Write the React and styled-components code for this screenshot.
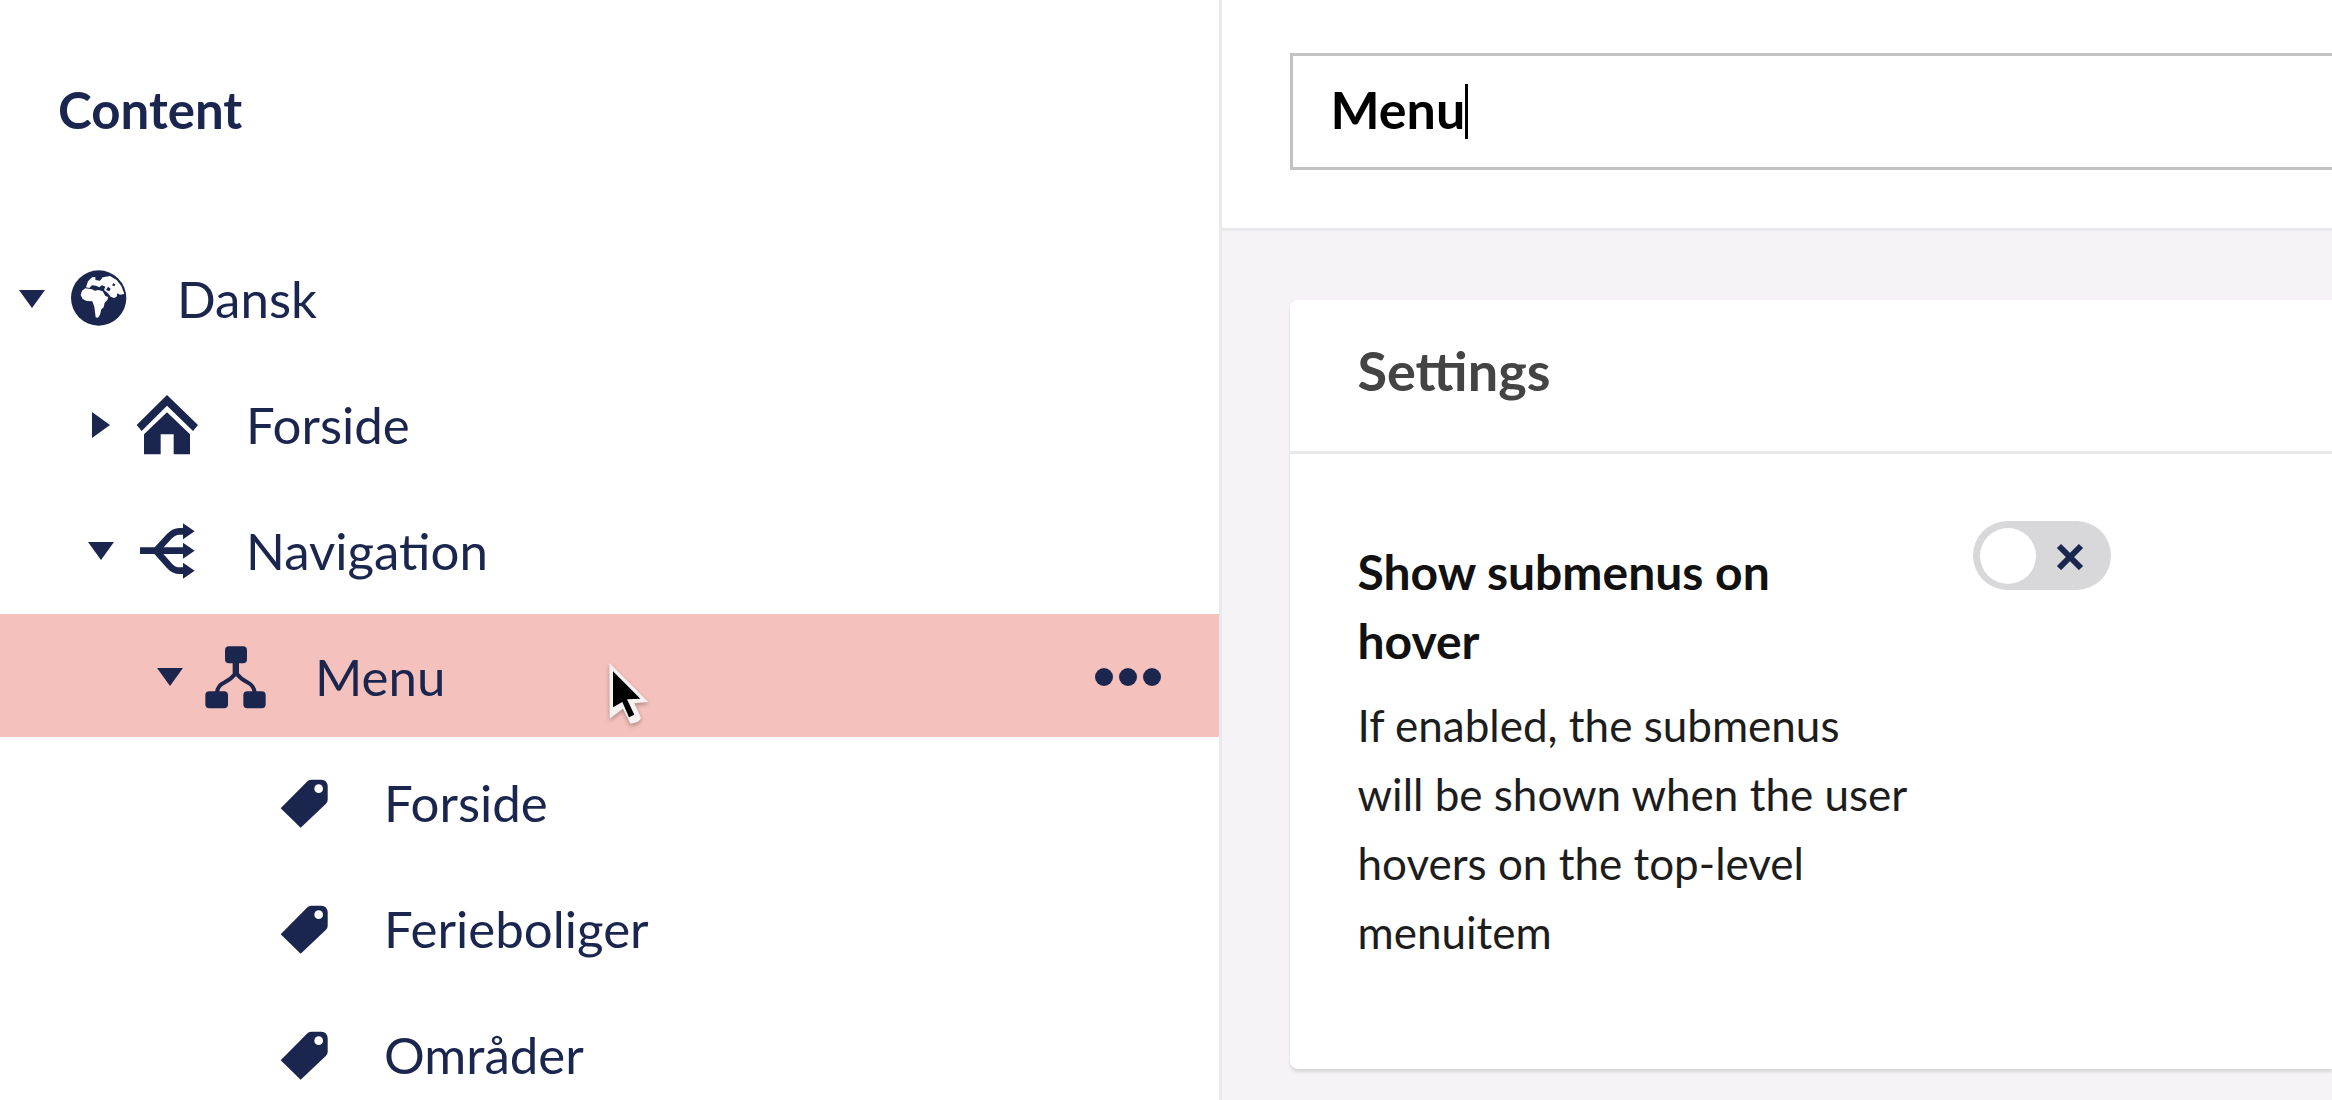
import { useState } from 'react';
import styled, { createGlobalStyle } from 'styled-components';

const GlobeIcon = () => (
  <Icon viewBox="12 15 189 189">
    <circle cx="104" cy="108" r="83" />
    <path
      fill="#fff"
      d="M50 99L54 86L64 79L84 82L92 86L104 84L116 88L124 102L133 105L130 114L122 122L119 136L112 142L108 158L102 167L95 166L93 150L91 134L85 118L68 117L56 111Z"
    />
    <path
      fill="#fff"
      d="M66 76L72 58L84 46L94 45L94 54L108 56L116 46L138 42L158 54L172 72L181 96L168 98L160 94L158 104L150 108L140 104L132 94L120 84L124 74L114 70L106 76L96 71L84 70L76 78Z"
    />
    <path d="M132 74l8 6l-4 8l-10-4zM148 64l6 3l-3 6l-7-3z" />
  </Icon>
);

const HouseIcon = () => (
  <Icon viewBox="411 456 189 189">
    <path d="M501 462L594 552L579 570L501 494L425 570L410 552Z" />
    <path d="M501 514L570 580V640H521V580H482V640H432V580Z" />
  </Icon>
);

const BranchIcon = () => (
  <Icon viewBox="15 6 189 189">
    <g fill="none" stroke="currentColor" strokeWidth="20">
      <path d="M24 101H160" />
      <path d="M72 101L112 58Q126 43 142 43H160" />
      <path d="M72 101L112 146Q126 161 142 161H160" />
    </g>
    <path d="M153 19L188 43L153 67ZM153 77L188 101L153 125ZM153 137L188 161L153 185Z" />
  </Icon>
);

const SitemapIcon = () => (
  <Icon viewBox="18 12 189 189">
    <rect x="75" y="16" width="66" height="51" rx="12" />
    <rect x="16" y="151" width="68" height="51" rx="12" />
    <rect x="130" y="151" width="67" height="51" rx="12" />
    <path
      fill="none"
      stroke="currentColor"
      strokeWidth="12"
      d="M51 155Q52 134 74 124Q94 114 108 96Q122 114 142 124Q162 134 164 155"
    />
    <path d="M98 60h19v36l-9 10l-10-10z" />
  </Icon>
);

const TagIcon = () => (
  <Icon viewBox="3 0 189 189">
    <path d="M20 112L101 30Q106 26 113 26H142Q160 27 161 46V86Q161 93 156 98L80 170Z" />
    <circle cx="134" cy="53" r="13" fill="#fff" />
  </Icon>
);

const icons = {
  globe: GlobeIcon,
  house: HouseIcon,
  branch: BranchIcon,
  sitemap: SitemapIcon,
  tag: TagIcon,
};

const nodes = [
  { id: 1, label: 'Dansk', icon: 'globe', level: 0, open: true, parent: true },
  { id: 2, label: 'Forside', icon: 'house', level: 1, parent: true },
  { id: 3, label: 'Navigation', icon: 'branch', level: 1, open: true, parent: true },
  { id: 4, label: 'Menu', icon: 'sitemap', level: 2, open: true, parent: true, active: true },
  { id: 5, label: 'Forside', icon: 'tag', level: 3 },
  { id: 6, label: 'Ferieboliger', icon: 'tag', level: 3 },
  { id: 7, label: 'Områder', icon: 'tag', level: 3 },
];

const App = () => {
  const [name, setName] = useState('Menu');
  const [hover, setHover] = useState(false);

  return (
    <Frame>
      <GlobalStyle />

      <Sidebar>
        <SidebarTitle>Content</SidebarTitle>

        <Tree>
          {nodes.map(x => {
            const NodeIcon = icons[x.icon];

            return (
              <Row key={x.id} $level={x.level} $active={x.active}>
                <CaretSlot>
                  {x.parent && (
                    <CaretButton aria-label={`Toggle ${x.label}`} aria-expanded={!!x.open}>
                      {x.open ? (
                        <svg width="26" height="18" viewBox="0 0 26 18">
                          <path d="M0 0H26L13 18Z" fill="currentColor" />
                        </svg>
                      ) : (
                        <svg width="18" height="26" viewBox="0 0 18 26">
                          <path d="M0 0V26L18 13Z" fill="currentColor" />
                        </svg>
                      )}
                    </CaretButton>
                  )}
                </CaretSlot>

                <NodeLink href="#">
                  <NodeIcon />
                  {x.label}
                </NodeLink>

                {x.active && (
                  <>
                    <MoreButton aria-label="Actions">
                      <svg width="66" height="18" viewBox="0 0 66 18" fill="currentColor">
                        <circle cx="9" cy="9" r="9" />
                        <circle cx="33" cy="9" r="9" />
                        <circle cx="57" cy="9" r="9" />
                      </svg>
                    </MoreButton>
                    <Pointer viewBox="141 60 126 189">
                      <path
                        fill="#f6f0f0"
                        d="M145 62L262 180L220 184L240 228Q236 242 208 245L186 200L146 230Z"
                      />
                      <path d="M156 88L238 170L198 172L220 218L204 226L184 180L156 196Z" />
                    </Pointer>
                  </>
                )}
              </Row>
            );
          })}
        </Tree>
      </Sidebar>

      <Main>
        <Header>
          <NameField>
            <NameInput
              aria-label="Name"
              value={name}
              onChange={e => setName(e.target.value)}
            />
            <TextCaret />
          </NameField>
        </Header>

        <Card>
          <CardTitle>Settings</CardTitle>

          <Property>
            <PropertyText>
              <PropertyLabel htmlFor="hover">Show submenus on hover</PropertyLabel>
              <PropertyHint>
                If enabled, the submenus will be shown when the user hovers on the
                top-level menuitem
              </PropertyHint>
            </PropertyText>

            <Toggle>
              <input
                id="hover"
                type="checkbox"
                checked={hover}
                onChange={e => setHover(e.target.checked)}
              />
              <svg width="28" height="28" viewBox="0 0 28 28">
                <path
                  d="M3 4L25 26M25 4L3 26"
                  fill="none"
                  stroke="currentColor"
                  strokeWidth="6"
                />
              </svg>
            </Toggle>
          </Property>
        </Card>
      </Main>
    </Frame>
  );
};

export default App;

const GlobalStyle = createGlobalStyle`
  * {
    box-sizing: border-box;
  }

  body {
    margin: 0;
    background-color: #fff;
    font-family: Lato, 'Open Sans', sans-serif;
    color: #1b264f;
  }

  button {
    padding: 0;
    border: none;
    background: none;
    color: inherit;
    cursor: pointer;
  }
`;

const Frame = styled.div`
  display: grid;
  grid-template-columns: minmax(0, 11fr) minmax(0, 10fr);
  min-height: 100vh;
  border-bottom: 1px solid #e9e9eb;
  overflow: hidden;
`;

const Sidebar = styled.nav`
  border-right: 3px solid #e9e9eb;
`;

const SidebarTitle = styled.h1`
  margin: 0;
  padding: 79px 58px 95px;
  font-size: 51px;
  line-height: 62px;
  font-weight: 700;
`;

const Tree = styled.ul`
  display: flex;
  flex-direction: column;
  gap: 3px;
  margin: 0;
  padding: 0;
  list-style: none;
`;

const Row = styled.li`
  position: relative;
  display: flex;
  align-items: center;
  height: 123px;
  padding: 2px 58px 0 ${({ $level }) => 14 + $level * 69}px;
  background-color: ${({ $active }) => ($active ? '#f5c1bc' : 'transparent')};
`;

const CaretSlot = styled.div`
  display: flex;
  width: 54px;
`;

const CaretButton = styled.button`
  display: flex;
  justify-content: center;
  align-items: center;
  width: 36px;
  height: 36px;
`;

const NodeLink = styled.a`
  display: flex;
  flex: 1;
  align-items: center;
  gap: 46px;
  font-size: 51px;
  line-height: 62px;
  color: inherit;
  text-decoration: none;
`;

const Icon = styled.svg`
  width: 63px;
  height: 63px;
  fill: currentColor;
  overflow: visible;
`;

const MoreButton = styled.button`
  display: flex;
`;

const Pointer = styled.svg`
  position: absolute;
  top: 48px;
  left: 608px;
  width: 42px;
  height: 63px;
  fill: #000;
  filter: drop-shadow(0 2px 2px rgba(0, 0, 0, 0.3));
  pointer-events: none;
`;

const Main = styled.main`
  background-color: #f5f3f5;
`;

const Header = styled.header`
  padding: 53px 0 58px 68px;
  background-color: #fff;
  border-bottom: 3px solid #e9e9eb;
`;

const NameField = styled.div`
  position: relative;
`;

const NameInput = styled.input`
  display: block;
  width: 100%;
  height: 117px;
  padding: 0 38px 6px;
  border: 3px solid #c2c2c2;
  border-right: none;
  border-radius: 0;
  outline: none;
  font-family: inherit;
  font-size: 52px;
  font-weight: 700;
  color: #000;
`;

const TextCaret = styled.span`
  position: absolute;
  top: 31px;
  left: 175px;
  width: 3px;
  height: 55px;
  background-color: #000;
`;

const Card = styled.section`
  margin: 69px 0 30px 68px;
  background-color: #fff;
  border-radius: 8px 0 0 8px;
  box-shadow: 0 3px 3px #d8d7d9;
`;

const CardTitle = styled.h2`
  margin: 0;
  padding: 38px 68px 48px;
  border-bottom: 3px solid #e9e9eb;
  font-size: 54px;
  line-height: 65px;
  font-weight: 700;
  color: #444;
`;

const Property = styled.div`
  display: flex;
  align-items: flex-start;
  gap: 65px;
  padding: 67px 68px 102px;
`;

const PropertyText = styled.div`
  flex: 0 0 550px;
  padding-top: 16px;
`;

const PropertyLabel = styled.label`
  display: block;
  padding-right: 60px;
  font-size: 48px;
  line-height: 69px;
  font-weight: 700;
  color: #111;
`;

const PropertyHint = styled.p`
  margin: 16px 0 0;
  font-size: 44px;
  line-height: 69px;
  color: #1d1d1d;
`;

const Toggle = styled.label`
  display: flex;
  justify-content: space-between;
  align-items: center;
  width: 138px;
  height: 69px;
  padding: 0 27px 0 7px;
  border-radius: 35px;
  background-color: #d8d7d9;
  cursor: pointer;

  input {
    appearance: none;
    width: 56px;
    height: 56px;
    margin: 0;
    border-radius: 50%;
    background-color: #fff;
  }
`;
